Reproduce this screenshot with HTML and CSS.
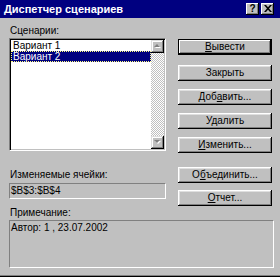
FILE: index.html
```html
<!DOCTYPE html>
<html lang="ru">
<head>
<meta charset="utf-8">
<title>Диспетчер сценариев</title>
<link rel="stylesheet" href="styles.css">
</head>
<body>
<div class="window">
  <div class="titlebar">
    <span class="title">Диспетчер сценариев</span>
    <div class="caps">
      <span class="capbtn help">?</span>
      <span class="capbtn close"><svg width="8" height="7" viewBox="0 0 8 7"><path d="M0 0h2l2 2.3L6 0h2L5 3.5 8 7H6L4 4.7 2 7H0l3-3.5z" fill="#000"/></svg></span>
    </div>
  </div>
  <div class="content">
    <div class="top">
      <div class="left">
        <div class="label">Сценарии:</div>
        <div class="list">
          <div class="items">
            <div class="item">Вариант 1</div>
            <div class="item sel">Вариант 2</div>
          </div>
          <div class="scrollbar">
            <div class="sbtn"><svg width="7" height="5" viewBox="0 0 7 5"><path d="M4 1L7 4H1z" fill="#fff"/><path d="M3 0L6 3H0z" fill="#808080"/></svg></div>
            <div class="track"></div>
            <div class="sbtn"><svg width="7" height="5" viewBox="0 0 7 5"><path d="M1 1H7L4 4z" fill="#fff"/><path d="M0 0H6L3 3z" fill="#808080"/></svg></div>
          </div>
        </div>
        <div class="label label-cells">Изменяемые ячейки:</div>
        <div class="field">$B$3:$B$4</div>
      </div>
      <div class="right">
        <div class="btn default"><span><u>В</u>ывести</span></div>
        <div class="btn">Закрыть</div>
        <div class="btn">Доб<u>а</u>вить...</div>
        <div class="btn">Удалить</div>
        <div class="btn"><u>И</u>зменить...</div>
        <div class="btn sep">О<u>б</u>ъединить...</div>
        <div class="btn tight"><u>О</u>тчет...</div>
      </div>
    </div>
    <div class="label label-notes">Примечание:</div>
    <div class="notes">Автор: 1 , 23.07.2002</div>
  </div>
</div>
</body>
</html>
```
FILE: styles.css
```css
html, body {
  margin: 0;
  padding: 0;
}
body {
  width: 280px;
  height: 277px;
  overflow: hidden;
  background: #c0c0c0;
  font-family: "Liberation Sans", Arial, sans-serif;
  font-size: 10px;
  color: #000;
}
.window {
  height: 277px;
  display: flex;
  flex-direction: column;
  box-shadow: inset 0 -1px #000, inset 0 -2px #808080;
}
.titlebar {
  height: 18px;
  flex: none;
  background: #000080;
  display: flex;
  align-items: center;
  justify-content: space-between;
  padding: 0 6px 0 4px;
}
.title {
  color: #fff;
  font-weight: bold;
  font-size: 11px;
  line-height: 12px;
}
.caps {
  display: flex;
  gap: 2px;
}
.capbtn {
  width: 13px;
  height: 12px;
  box-sizing: border-box;
  background: #c0c0c0;
  box-shadow: inset -1px -1px #000, inset 1px 1px #fff, inset -2px -2px #808080;
  display: flex;
  align-items: center;
  justify-content: center;
  font-weight: bold;
  font-size: 10px;
  line-height: 10px;
  padding-bottom: 1px;
}
.content {
  flex: 1;
  padding: 7px 6px 0 9px;
  display: flex;
  flex-direction: column;
}
.top {
  display: flex;
  gap: 12px;
  height: 181px;
}
.left {
  width: 157px;
  display: flex;
  flex-direction: column;
}
.label {
  height: 12px;
  line-height: 12px;
  padding-left: 1px;
  white-space: nowrap;
}
.list {
  margin-top: 1px;
  height: 113px;
  box-sizing: border-box;
  border-top: 1px solid #808080;
  border-left: 1px solid #808080;
  border-right: 1px solid #fff;
  border-bottom: 1px solid #fff;
  box-shadow: inset 1px 1px #000, inset -1px -1px #c0c0c0;
  padding: 1px;
  background: #fff;
  display: flex;
}
.items {
  flex: 1;
}
.item {
  height: 11px;
  line-height: 11px;
  padding-left: 2px;
  white-space: nowrap;
}
.item.sel {
  background: #000080;
  color: #fff;
  outline: 1px dotted #ffff80;
  outline-offset: -1px;
}
.scrollbar {
  width: 13px;
  display: flex;
  flex-direction: column;
}
.sbtn {
  height: 13px;
  flex: none;
  box-sizing: border-box;
  background: #c0c0c0;
  box-shadow: inset -1px -1px #000, inset 1px 1px #dfdfdf, inset -2px -2px #808080, inset 2px 2px #fff;
  display: flex;
  align-items: center;
  justify-content: center;
}
.track {
  flex: 1;
  background-image: conic-gradient(#fff 25%, #c0c0c0 0 50%, #fff 0 75%, #c0c0c0 0);
  background-size: 2px 2px;
}
.label-cells {
  margin-top: 18px;
}
.field {
  margin-top: 2px;
  height: 16px;
  box-sizing: border-box;
  border-top: 1px solid #808080;
  border-left: 1px solid #808080;
  border-right: 1px solid #fff;
  border-bottom: 1px solid #fff;
  line-height: 14px;
  padding-left: 1px;
}
.right {
  width: 94px;
  display: flex;
  flex-direction: column;
  gap: 8px;
  padding-top: 14px;
}
.btn {
  height: 16px;
  box-sizing: border-box;
  background: #c0c0c0;
  box-shadow: inset -1px -1px #000, inset 1px 1px #fff, inset -2px -2px #808080, inset 2px 2px #dfdfdf;
  display: flex;
  align-items: center;
  justify-content: center;
  white-space: nowrap;
  line-height: 12px;
}
.btn.default {
  border: 1px solid #000;
  box-shadow: inset -1px -1px #000, inset 1px 1px #fff, inset -2px -2px #808080;
  margin-bottom: 2px;
}
.btn.sep {
  margin-top: 6px;
}
.btn.tight {
  margin-top: -1px;
}
.label-notes {
  margin-top: 1px;
}
.notes {
  margin-top: 1px;
  height: 48px;
  box-sizing: border-box;
  border-top: 1px solid #808080;
  border-left: 1px solid #808080;
  border-right: 1px solid #fff;
  border-bottom: 1px solid #fff;
  padding: 1px 0 0 1px;
  line-height: 11px;
}
```
